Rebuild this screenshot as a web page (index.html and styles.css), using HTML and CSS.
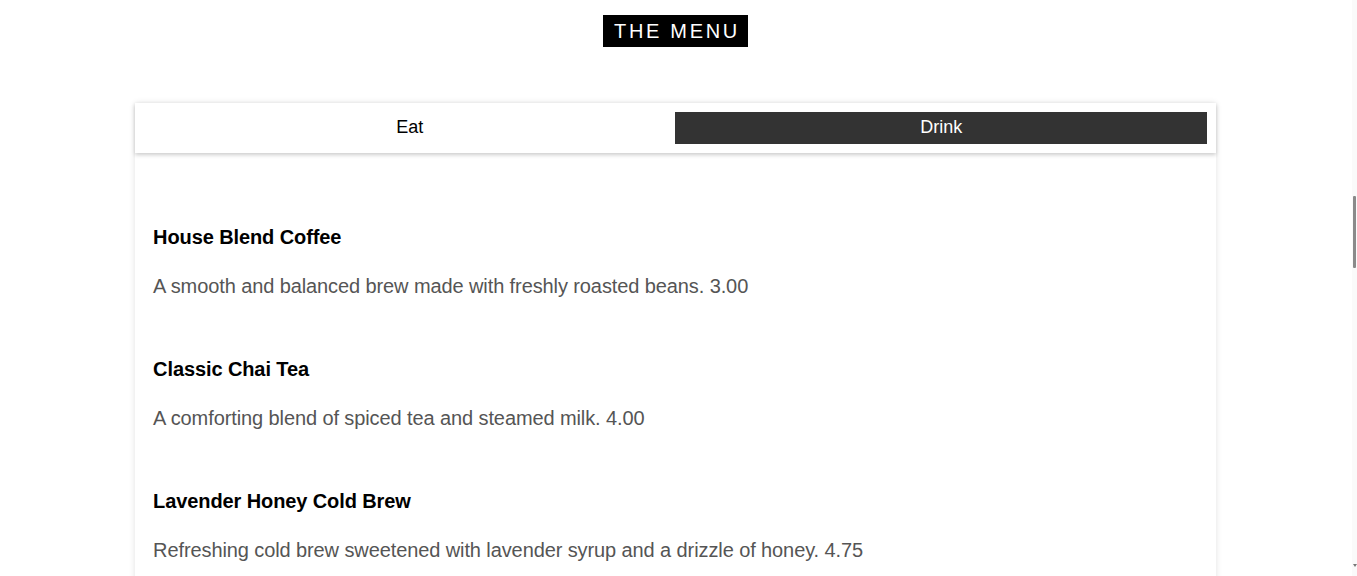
FILE: index.html
```html
<!DOCTYPE html>
<html>
<head>
<meta charset="utf-8">
<link rel="stylesheet" href="styles.css">
</head>
<body>
<header class="top">
  <h1 class="title">THE MENU</h1>
</header>
<main class="card">
  <nav class="tabs">
    <button class="tab">Eat</button>
    <button class="tab tab-active">Drink</button>
  </nav>
  <section class="items">
    <article class="item">
      <h3 class="item-name">House Blend Coffee</h3>
      <p class="item-desc">A smooth and balanced brew made with freshly roasted beans. 3.00</p>
    </article>
    <article class="item">
      <h3 class="item-name">Classic Chai Tea</h3>
      <p class="item-desc">A comforting blend of spiced tea and steamed milk. 4.00</p>
    </article>
    <article class="item">
      <h3 class="item-name">Lavender Honey Cold Brew</h3>
      <p class="item-desc">Refreshing cold brew sweetened with lavender syrup and a drizzle of honey. 4.75</p>
    </article>
  </section>
</main>
<div class="scrollbar"><div class="thumb"></div><div class="arrow"></div></div>
</body>
</html>
```
FILE: styles.css
```css
html, body {
  margin: 0;
  padding: 0;
  background: #fff;
  font-family: "Liberation Sans", Arial, sans-serif;
}
body {
  padding-right: 6px;
}
.top {
  display: flex;
  justify-content: center;
  padding-top: 15px;
  margin-bottom: 56px;
}
.title {
  margin: 0;
  background: #000;
  color: #fff;
  font-weight: normal;
  font-size: 20px;
  letter-spacing: 2.7px;
  line-height: 32px;
  padding: 0 8px 0 11px;
}
.card {
  width: 80%;
  margin: 0 auto;
  background: #fff;
  box-shadow: 0 0 6px rgba(0,0,0,0.12);
  padding-bottom: 40px;
}
.tabs {
  display: grid;
  grid-template-columns: 1fr 1fr;
  padding: 9px;
  box-shadow: 0 2px 4px rgba(0,0,0,0.2);
}
.tab {
  border: none;
  background: #fff;
  color: #000;
  font-family: "Liberation Sans", Arial, sans-serif;
  font-size: 18px;
  height: 32px;
  padding: 0 0 2px;
}
.tab-active {
  background: #333;
  color: #fff;
}
.items {
  padding: 73px 18px 0;
  display: flex;
  flex-direction: column;
  gap: 60px;
}
.item-name {
  margin: 0 0 26px;
  font-size: 20px;
  line-height: 23px;
  font-weight: bold;
  color: #000;
  letter-spacing: -0.1px;
}
.item-desc {
  margin: 0;
  font-size: 20px;
  line-height: 23px;
  color: #555;
  letter-spacing: -0.1px;
}
.scrollbar {
  position: fixed;
  top: 0;
  right: 0;
  width: 5px;
  height: 100%;
  background: #fafafa;
}
.thumb {
  position: absolute;
  top: 196px;
  left: 1px;
  width: 3px;
  height: 72px;
  background: #8a8a8a;
  border-radius: 1px;
}
.arrow {
  position: absolute;
  bottom: 9px;
  left: 1px;
  width: 0;
  height: 0;
  border-left: 2px solid transparent;
  border-right: 2px solid transparent;
  border-top: 3px solid #777;
}
```
